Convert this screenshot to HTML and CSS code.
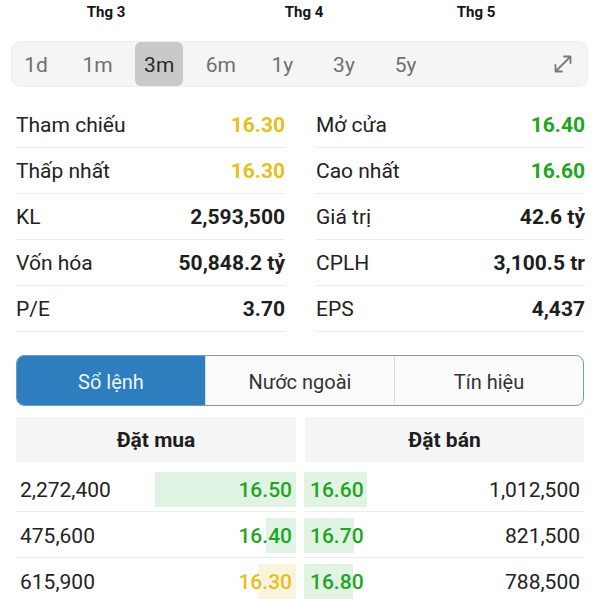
FILE: index.html
```html
<!DOCTYPE html>
<html lang="vi">
<head>
  <meta charset="UTF-8" />
  <meta name="viewport" content="width=device-width, initial-scale=1.0"/>
  <title>Chi tiết cổ phiếu</title>
  <link rel="stylesheet" href="styles.css">
</head>
<body>

<div class="months">
  <span class="month" style="left:106px;">Thg 3</span>
  <span class="month" style="left:304px;">Thg 4</span>
  <span class="month" style="left:476px;">Thg 5</span>
</div>

<div class="range">
  <span class="range-item">1d</span>
  <span class="range-item">1m</span>
  <span class="range-item active">3m</span>
  <span class="range-item">6m</span>
  <span class="range-item">1y</span>
  <span class="range-item">3y</span>
  <span class="range-item">5y</span>
  <svg class="expand" width="20" height="20" viewBox="0 0 20 20">
    <path d="M2.5 17.5 L17.5 2.5 M11 2.5 H17.5 V9 M2.5 11 V17.5 H9" fill="none" stroke="#7a7a7a" stroke-width="1.8" stroke-linecap="round" stroke-linejoin="round"/>
  </svg>
</div>

<div class="stats">
  <div class="stat"><span>Tham chiếu</span><b class="ref">16.30</b></div>
  <div class="stat"><span>Mở cửa</span><b class="up">16.40</b></div>
  <div class="stat"><span>Thấp nhất</span><b class="ref">16.30</b></div>
  <div class="stat"><span>Cao nhất</span><b class="up">16.60</b></div>
  <div class="stat"><span>KL</span><b>2,593,500</b></div>
  <div class="stat"><span>Giá trị</span><b>42.6 tỷ</b></div>
  <div class="stat"><span>Vốn hóa</span><b>50,848.2 tỷ</b></div>
  <div class="stat"><span>CPLH</span><b>3,100.5 tr</b></div>
  <div class="stat"><span>P/E</span><b>3.70</b></div>
  <div class="stat"><span>EPS</span><b>4,437</b></div>
</div>

<div class="tabs">
  <div class="tab active">Sổ lệnh</div>
  <div class="tab">Nước ngoài</div>
  <div class="tab">Tín hiệu</div>
</div>

<div class="book">
  <div class="book-head">Đặt mua</div>
  <div class="book-head">Đặt bán</div>

  <div class="cell buy">
    <span class="bar up-bg" style="width:141px;"></span>
    <span class="vol">2,272,400</span><span class="price up">16.50</span>
  </div>
  <div class="cell sell">
    <span class="bar up-bg" style="width:63px;"></span>
    <span class="price up">16.60</span><span class="vol">1,012,500</span>
  </div>

  <div class="cell buy">
    <span class="bar up-bg" style="width:30px;"></span>
    <span class="vol">475,600</span><span class="price up">16.40</span>
  </div>
  <div class="cell sell">
    <span class="bar up-bg" style="width:50px;"></span>
    <span class="price up">16.70</span><span class="vol">821,500</span>
  </div>

  <div class="cell buy">
    <span class="bar ref-bg" style="width:38px;"></span>
    <span class="vol">615,900</span><span class="price ref">16.30</span>
  </div>
  <div class="cell sell">
    <span class="bar up-bg" style="width:49px;"></span>
    <span class="price up">16.80</span><span class="vol">788,500</span>
  </div>
</div>

</body>
</html>
```

FILE: styles.css
```css
body {
  font-family: Roboto, "Noto Sans", sans-serif;
  background: #ffffff;
  color: #222;
  margin: 0;
  padding: 0;
}
.months {
  position: relative;
  height: 42px;
}
.month {
  position: absolute;
  top: 3px;
  transform: translateX(-50%);
  font-size: 15px;
  font-weight: bold;
  color: #151515;
}
.range {
  display: flex;
  align-items: center;
  gap: 13.6px;
  height: 44px;
  margin: 0 13px 0 12px;
  background: #f5f5f5;
  border-radius: 9px;
  box-shadow: 0 0 0 1px #eeeeee;
}
.range-item {
  width: 48px;
  height: 44px;
  display: flex;
  align-items: center;
  justify-content: center;
  font-size: 21px;
  color: #707070;
  border-radius: 6px;
  padding-top: 2px;
  box-sizing: border-box;
}
.range-item.active {
  background: #c9c9c9;
  color: #2a2a2a;
}
.expand {
  margin-left: auto;
  margin-right: 14px;
}
.stats {
  display: grid;
  grid-template-columns: 1fr 1fr;
  column-gap: 31px;
  padding: 0 15px 0 16px;
  margin-top: 16px;
}
.stat {
  display: flex;
  justify-content: space-between;
  align-items: center;
  height: 45px;
  border-bottom: 1px solid #ececec;
  font-size: 21px;
}
.stat b {
  font-weight: bold;
  color: #1e1e1e;
}
.stat b.ref, .price.ref {
  color: #e4c11d;
}
.stat b.up, .price.up {
  color: #1fa524;
}
.tabs {
  display: flex;
  height: 49px;
  margin: 23px 16px 0 16px;
  border: 1px solid #6f9cc4;
  border-radius: 8px;
  overflow: hidden;
  background: #fbfbfb;
}
.tab {
  flex: 1;
  display: flex;
  align-items: center;
  justify-content: center;
  font-size: 20px;
  color: #333;
  border-left: 1px solid #dcdcdc;
  padding-top: 2px;
}
.tab:first-child {
  border-left: none;
}
.tab.active {
  background: #2d7dbf;
  color: #eef6fc;
}
.book {
  display: grid;
  grid-template-columns: 280px 279px;
  column-gap: 9px;
  margin: 11px 16px 0 16px;
}
.book-head {
  height: 45px;
  display: flex;
  align-items: center;
  justify-content: center;
  background: #f5f5f5;
  font-size: 21px;
  font-weight: bold;
  color: #1e1e1e;
  margin-bottom: 4px;
}
.cell {
  position: relative;
  display: flex;
  justify-content: space-between;
  align-items: center;
  height: 45px;
  padding: 3px 4px 0 4px;
  box-sizing: border-box;
  height: 46px;
  border-bottom: 1px solid #ededed;
  font-size: 21px;
}
.bar {
  position: absolute;
  top: 6px;
  height: 35px;
}
.buy .bar {
  right: 0;
}
.sell .bar {
  left: -1px;
}
.up-bg {
  background: #e1f4e4;
}
.ref-bg {
  background: #fbf4dd;
}
.vol, .price {
  position: relative;
}
.price {
  font-weight: 500;
}
.sell .price {
  padding-left: 1px;
}
```
